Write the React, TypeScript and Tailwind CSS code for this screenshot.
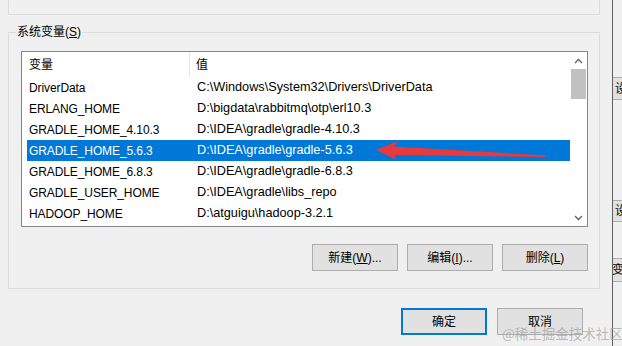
import * as React from "react";

const rows = [
    ["DriverData", "C:\\Windows\\System32\\Drivers\\DriverData"],
    ["ERLANG_HOME", "D:\\bigdata\\rabbitmq\\otp\\erl10.3"],
    ["GRADLE_HOME_4.10.3", "D:\\IDEA\\gradle\\gradle-4.10.3"],
    ["GRADLE_HOME_5.6.3", "D:\\IDEA\\gradle\\gradle-5.6.3"],
    ["GRADLE_HOME_6.8.3", "D:\\IDEA\\gradle\\gradle-6.8.3"],
    ["GRADLE_USER_HOME", "D:\\IDEA\\gradle\\libs_repo"],
    ["HADOOP_HOME", "D:\\atguigu\\hadoop-3.2.1"],
];

const font = { fontFamily: '"Liberation Sans", "Noto Sans CJK SC", sans-serif' };

const Btn = ({ children, primary }: { children: React.ReactNode; primary?: boolean }) => (
    <div
        className={`w-[86px] h-[27px] flex items-center justify-center bg-[#e1e1e1] text-[12px] text-black ${
            primary ? "border-2 border-[#0078d7]" : "border border-[#adadad]"
        }`}
    >
        {children}
    </div>
);

const App = () => {
    return (
        <div className="w-[622px] h-[346px] bg-[#f0f0f0] relative overflow-hidden flex" style={font}>
            <div className="w-[612px] shrink-0 flex flex-col">
                {/* upper group box, cut off */}
                <div className="ml-[8px] w-[592px] h-[15px] border border-t-0 border-[#dcdcdc]" />

                <fieldset className="mt-[9px] ml-[8px] w-[592px] h-[265px] border border-[#dcdcdc] pl-[7px]">
                    <legend className="px-[1px] text-[12px] leading-[16px] text-black">
                        系统变量(<u>S</u>)
                    </legend>

                    <div className="mt-[11px] ml-[5px] w-[567px] h-[176px] border border-[#828790] bg-white flex">
                        <div className="w-[548px] flex flex-col">
                            <div className="h-[25px] flex items-center ml-[5px] text-[12px] text-black">
                                <div className="w-[163px] h-full flex items-center pl-[2px] border-r border-[#e5e5e5]">
                                    变量
                                </div>
                                <div className="pl-[6px]">值</div>
                            </div>
                            {rows.map(([k, v], i) => (
                                <div
                                    key={k}
                                    className={`h-[21px] ml-[5px] flex items-center ${
                                        i === 3 ? "bg-[#0078d7] text-white" : "text-black"
                                    }`}
                                >
                                    <div className="w-[163px] pl-[2px] text-[12px] tracking-[-0.1px]">{k}</div>
                                    <div className="pl-[7px] text-[12.7px]">{v}</div>
                                </div>
                            ))}
                        </div>
                        {/* scrollbar */}
                        <div className="w-[17px] flex flex-col bg-white">
                            <div className="h-[17px] flex items-center justify-center">
                                <svg width="9" height="6" viewBox="0 0 9 6">
                                    <path d="M1 5 L4.5 1.5 L8 5" fill="none" stroke="#606060" strokeWidth="1.3" />
                                </svg>
                            </div>
                            <div className="h-[30px] mx-[1px] bg-[#c1c1c1]" />
                            <div className="flex-1" />
                            <div className="h-[17px] flex items-center justify-center">
                                <svg width="9" height="6" viewBox="0 0 9 6">
                                    <path d="M1 1 L4.5 4.5 L8 1" fill="none" stroke="#606060" strokeWidth="1.3" />
                                </svg>
                            </div>
                        </div>
                    </div>

                    <div className="mt-[17px] ml-[5px] w-[567px] flex justify-end gap-[9px]">
                        <Btn>
                            新建(<u>W</u>)...
                        </Btn>
                        <Btn>
                            编辑(<u>I</u>)...
                        </Btn>
                        <Btn>
                            删除(<u>L</u>)
                        </Btn>
                    </div>
                </fieldset>

                <div className="mt-[19px] ml-[401px] flex gap-[10px]">
                    <Btn primary>确定</Btn>
                    <Btn>取消</Btn>
                </div>
            </div>

            {/* window behind, right edge */}
            <div className="flex-1 border-l border-[#5f5f5f] bg-[#f0f0f0] flex flex-col overflow-hidden text-[12px] text-black">
                <div className="mt-[77px] h-[23px] bg-[#e1e1e1] border-y border-[#adadad] flex items-center pl-[2px]">
                    设
                </div>
                <div className="mt-[100px] h-[22px] bg-[#e1e1e1] border-y border-[#adadad] flex items-center pl-[2px]">
                    设
                </div>
                <div className="mt-[36px] h-[24px] bg-[#e1e1e1] border-y border-[#adadad] flex items-center -ml-[1px]">
                    变
                </div>
            </div>

            {/* red arrow annotation */}
            <svg className="absolute left-0 top-0 pointer-events-none" width="622" height="346">
                <path d="M376 150 L398 141 L394 146.5 L546 155.5 L546 157 L394 155 L397 160 Z" fill="#e8393c" />
            </svg>

            {/* watermark */}
            <div
                className="absolute left-[502px] top-[324px] text-[13.5px] leading-[18px] whitespace-nowrap text-[#a0a0a0]/70"
                style={{ fontFamily: '"Noto Sans CJK SC", sans-serif' }}
            >
                @稀土掘金技术社区
            </div>
        </div>
    );
};

export default App;
